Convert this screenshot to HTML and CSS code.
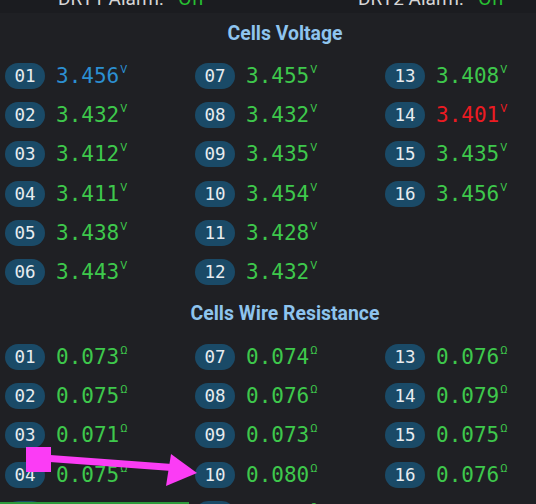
FILE: index.html
```html
<!DOCTYPE html>
<html>
<head>
<meta charset="utf-8">
<link rel="stylesheet" href="styles.css">
</head>
<body>
<div class="page">
  <div class="alarms">
    <div class="alarm"><span class="lbl">DRY1 Alarm:</span> <span class="off">Off</span></div>
    <div class="alarm"><span class="lbl">DRY2 Alarm:</span> <span class="off">Off</span></div>
  </div>
  <div class="content">
    <div class="title">Cells Voltage</div>
    <div class="grid">
      <div class="cell"><span class="pill">01</span><span class="val blue">3.456<sup>V</sup></span></div>
      <div class="cell"><span class="pill">07</span><span class="val">3.455<sup>V</sup></span></div>
      <div class="cell"><span class="pill">13</span><span class="val">3.408<sup>V</sup></span></div>
      <div class="cell"><span class="pill">02</span><span class="val">3.432<sup>V</sup></span></div>
      <div class="cell"><span class="pill">08</span><span class="val">3.432<sup>V</sup></span></div>
      <div class="cell"><span class="pill">14</span><span class="val red">3.401<sup>V</sup></span></div>
      <div class="cell"><span class="pill">03</span><span class="val">3.412<sup>V</sup></span></div>
      <div class="cell"><span class="pill">09</span><span class="val">3.435<sup>V</sup></span></div>
      <div class="cell"><span class="pill">15</span><span class="val">3.435<sup>V</sup></span></div>
      <div class="cell"><span class="pill">04</span><span class="val">3.411<sup>V</sup></span></div>
      <div class="cell"><span class="pill">10</span><span class="val">3.454<sup>V</sup></span></div>
      <div class="cell"><span class="pill">16</span><span class="val">3.456<sup>V</sup></span></div>
      <div class="cell"><span class="pill">05</span><span class="val">3.438<sup>V</sup></span></div>
      <div class="cell"><span class="pill">11</span><span class="val">3.428<sup>V</sup></span></div>
      <div class="cell empty"></div>
      <div class="cell"><span class="pill">06</span><span class="val">3.443<sup>V</sup></span></div>
      <div class="cell"><span class="pill">12</span><span class="val">3.432<sup>V</sup></span></div>
      <div class="cell empty"></div>
    </div>
    <div class="title">Cells Wire Resistance</div>
    <div class="grid wire">
      <div class="cell"><span class="pill">01</span><span class="val">0.073<sup>Ω</sup></span></div>
      <div class="cell"><span class="pill">07</span><span class="val">0.074<sup>Ω</sup></span></div>
      <div class="cell"><span class="pill">13</span><span class="val">0.076<sup>Ω</sup></span></div>
      <div class="cell"><span class="pill">02</span><span class="val">0.075<sup>Ω</sup></span></div>
      <div class="cell"><span class="pill">08</span><span class="val">0.076<sup>Ω</sup></span></div>
      <div class="cell"><span class="pill">14</span><span class="val">0.079<sup>Ω</sup></span></div>
      <div class="cell"><span class="pill">03</span><span class="val">0.071<sup>Ω</sup></span></div>
      <div class="cell"><span class="pill">09</span><span class="val">0.073<sup>Ω</sup></span></div>
      <div class="cell"><span class="pill">15</span><span class="val">0.075<sup>Ω</sup></span></div>
      <div class="cell"><span class="pill">04</span><span class="val">0.075<sup>Ω</sup></span></div>
      <div class="cell"><span class="pill">10</span><span class="val">0.080<sup>Ω</sup></span></div>
      <div class="cell"><span class="pill">16</span><span class="val">0.076<sup>Ω</sup></span></div>
      <div class="cell"><span class="pill">05</span><span class="val">0.074<sup>Ω</sup></span></div>
      <div class="cell"><span class="pill">11</span><span class="val">0.077<sup>Ω</sup></span></div>
      <div class="cell empty"></div>
    </div>
  </div>
  <div class="greenline"></div>
  <svg class="annot" width="536" height="504" viewBox="0 0 536 504">
    <rect x="26" y="447" width="25" height="25" fill="#fb3cf5"/>
    <line x1="50" y1="458.5" x2="172" y2="467.5" stroke="#fb3cf5" stroke-width="7"/>
    <polygon points="171,454 197,473 166,486" fill="#fb3cf5"/>
  </svg>
</div>
</body>
</html>
```
FILE: styles.css
```css
html, body {
  margin: 0;
  padding: 0;
  background: #1f2024;
  overflow: hidden;
}
.page {
  position: relative;
  width: 536px;
  height: 504px;
  overflow: hidden;
  background: #1f2024;
}
.alarms {
  height: 13px;
  overflow: hidden;
  background: #1b1c20;
  display: grid;
  grid-template-columns: 300px 1fr;
  padding-left: 58px;
  font-family: Roboto, "Liberation Sans", sans-serif;
  font-size: 19px;
}
.alarm {
  line-height: 20px;
  margin-top: -11px;
  white-space: nowrap;
}
.lbl { color: #d6d6d6; }
.off { color: #27c232; margin-left: 10px; }
.content {
  width: 570px;
  padding-top: 1px;
}
.title {
  height: 40px;
  line-height: 40px;
  text-align: center;
  font-family: Roboto, "Liberation Sans", sans-serif;
  font-weight: bold;
  font-size: 19.4px;
  color: #8ec4ee;
}
.grid {
  display: grid;
  grid-template-columns: repeat(3, 190px);
  grid-auto-rows: 26px;
  row-gap: 13.2px;
  padding-left: 5px;
  margin: 9px 0 9px 0;
}
.grid.wire {
  margin-top: 10px;
}
.cell {
  display: flex;
  align-items: center;
  gap: 11px;
  font-family: "DejaVu Sans Mono", monospace;
}
.pill {
  width: 40px;
  height: 26px;
  border-radius: 13px;
  background: #1a4a67;
  color: #e8ecef;
  font-size: 17.5px;
  line-height: 26px;
  text-align: center;
}
.val {
  font-size: 21px;
  line-height: 26px;
  color: #3ec84c;
}
.val sup {
  font-family: Roboto, "Liberation Sans", sans-serif;
  font-size: 11px;
  vertical-align: top;
  line-height: 13px;
  margin-left: 1px;
}
.val.blue { color: #2c8fd1; }
.val.red { color: #ec1b22; }
.greenline {
  position: absolute;
  left: 0;
  top: 502px;
  width: 189px;
  height: 2px;
  background: #2c9a3b;
}
.annot {
  position: absolute;
  left: 0;
  top: 0;
}
```
